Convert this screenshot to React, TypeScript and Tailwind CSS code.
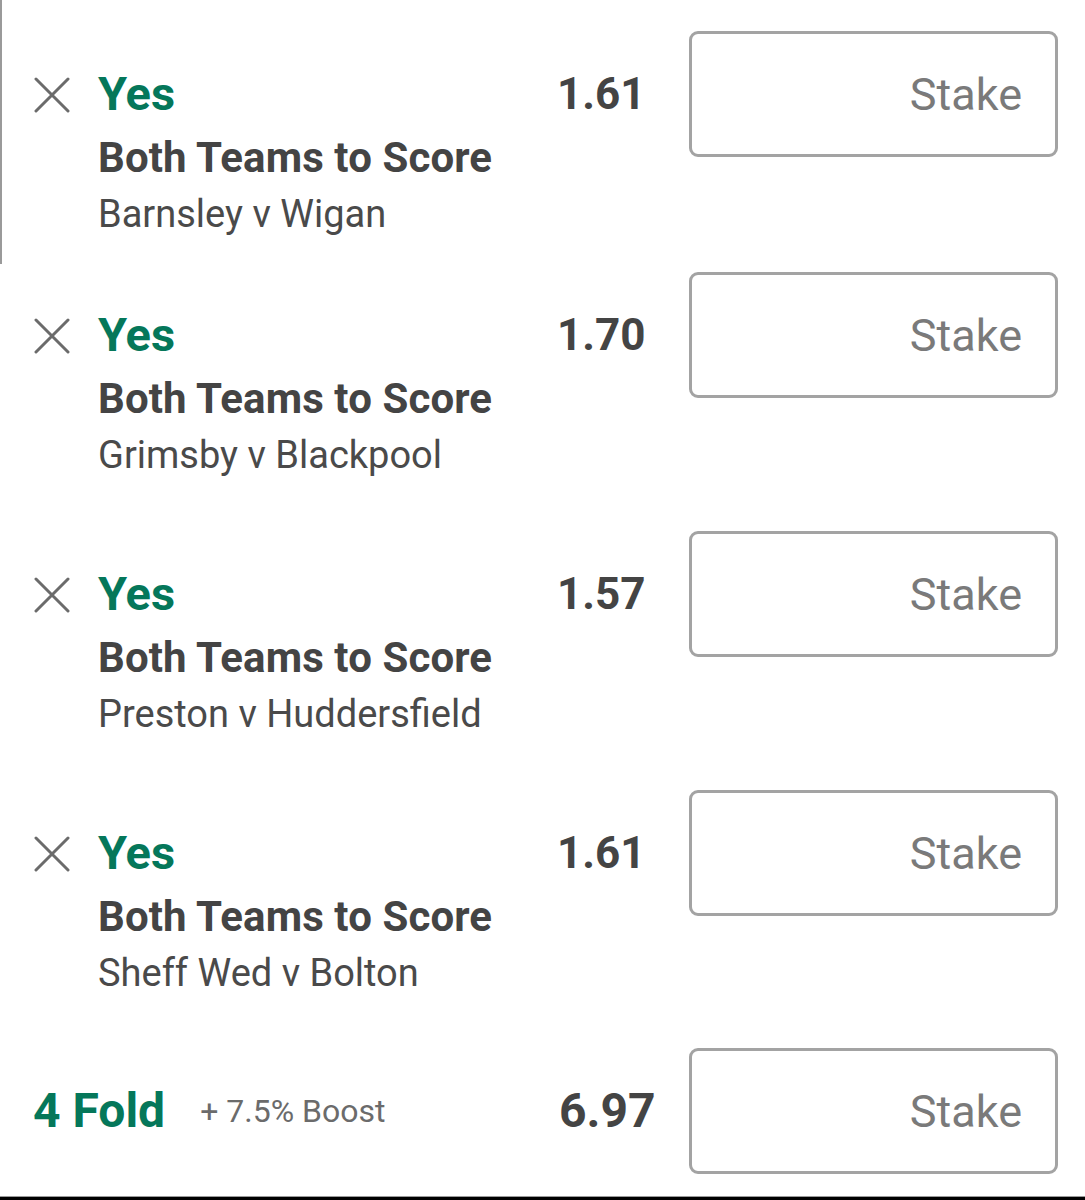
import React from 'react'

interface Selection {
  odds: string
  market: string
  match: string
}

const selections: Selection[] = [
  { odds: '1.61', market: 'Both Teams to Score', match: 'Barnsley v Wigan' },
  { odds: '1.70', market: 'Both Teams to Score', match: 'Grimsby v Blackpool' },
  { odds: '1.57', market: 'Both Teams to Score', match: 'Preston v Huddersfield' },
  { odds: '1.61', market: 'Both Teams to Score', match: 'Sheff Wed v Bolton' },
]

// gap above each row's stake box
const rowGaps = ['mt-[31px]', 'mt-[8px]', 'mt-[54px]', 'mt-[54px]']

function StakeBox() {
  return (
    <div className="w-[369px] h-[126px] border-[3px] border-[#a3a3a3] rounded-[9px] flex items-center justify-end pr-[33px] shrink-0">
      <span className="text-[45px] leading-none text-[#7a7a7a]">Stake</span>
    </div>
  )
}

function CloseIcon() {
  return (
    <svg width="36" height="36" viewBox="0 0 36 36" fill="none">
      <path d="M2 2L34 34M34 2L2 34" stroke="#6b6b6b" strokeWidth="3" strokeLinecap="round" />
    </svg>
  )
}

function SelectionRow({ sel, gap, inset }: { sel: Selection; gap: string; inset?: boolean }) {
  return (
    <div className={`flex items-start ${gap} ${inset ? '-ml-[2px]' : ''}`}>
      <div className="w-[98px] pl-[34px] pt-[46px] shrink-0">
        <CloseIcon />
      </div>
      <div className="w-[459px] pt-[36px] shrink-0">
        <div className="text-[47px] leading-[54px] font-bold text-[#05775a]">Yes</div>
        <div className="text-[42px] leading-[48px] font-bold text-[#444] mt-[13px] tracking-[0.1px]">{sel.market}</div>
        <div className="text-[38px] leading-[44px] text-[#4a4a4a] mt-[10px]">{sel.match}</div>
      </div>
      <div className="w-[132px] h-[126px] flex items-center shrink-0">
        <span className="text-[44px] leading-none font-bold text-[#444]">{sel.odds}</span>
      </div>
      <StakeBox />
    </div>
  )
}

export default function App() {
  return (
    <div
      className="w-[1085px] h-[1200px] bg-white flex flex-col text-[#444] overflow-hidden"
      style={{ fontFamily: 'Roboto, "Liberation Sans", sans-serif' }}
    >
      <div className="border-l-2 border-[#9a9a9a] h-[264px] flex flex-col shrink-0">
        <SelectionRow sel={selections[0]} gap={rowGaps[0]} inset />
      </div>
      {selections.slice(1).map((sel, i) => (
        <SelectionRow key={i} sel={sel} gap={rowGaps[i + 1]} />
      ))}

      {/* Accumulator */}
      <div className="flex items-center mt-[53px]">
        <div className="w-[557px] flex items-center pl-[33px] shrink-0">
          <span className="text-[48px] leading-none font-bold text-[#05775a]">4 Fold</span>
          <span className="text-[32px] leading-none text-[#6b6b6b] ml-[35px]">+ 7.5% Boost</span>
        </div>
        <div className="w-[132px] pl-[2px] shrink-0">
          <span className="text-[48px] leading-none font-bold text-[#444]">6.97</span>
        </div>
        <StakeBox />
      </div>

      <div className="flex-1" />
      <div className="h-[1px] bg-[#9a9a9a]" />
      <div className="h-[3px] bg-black" />
    </div>
  )
}
